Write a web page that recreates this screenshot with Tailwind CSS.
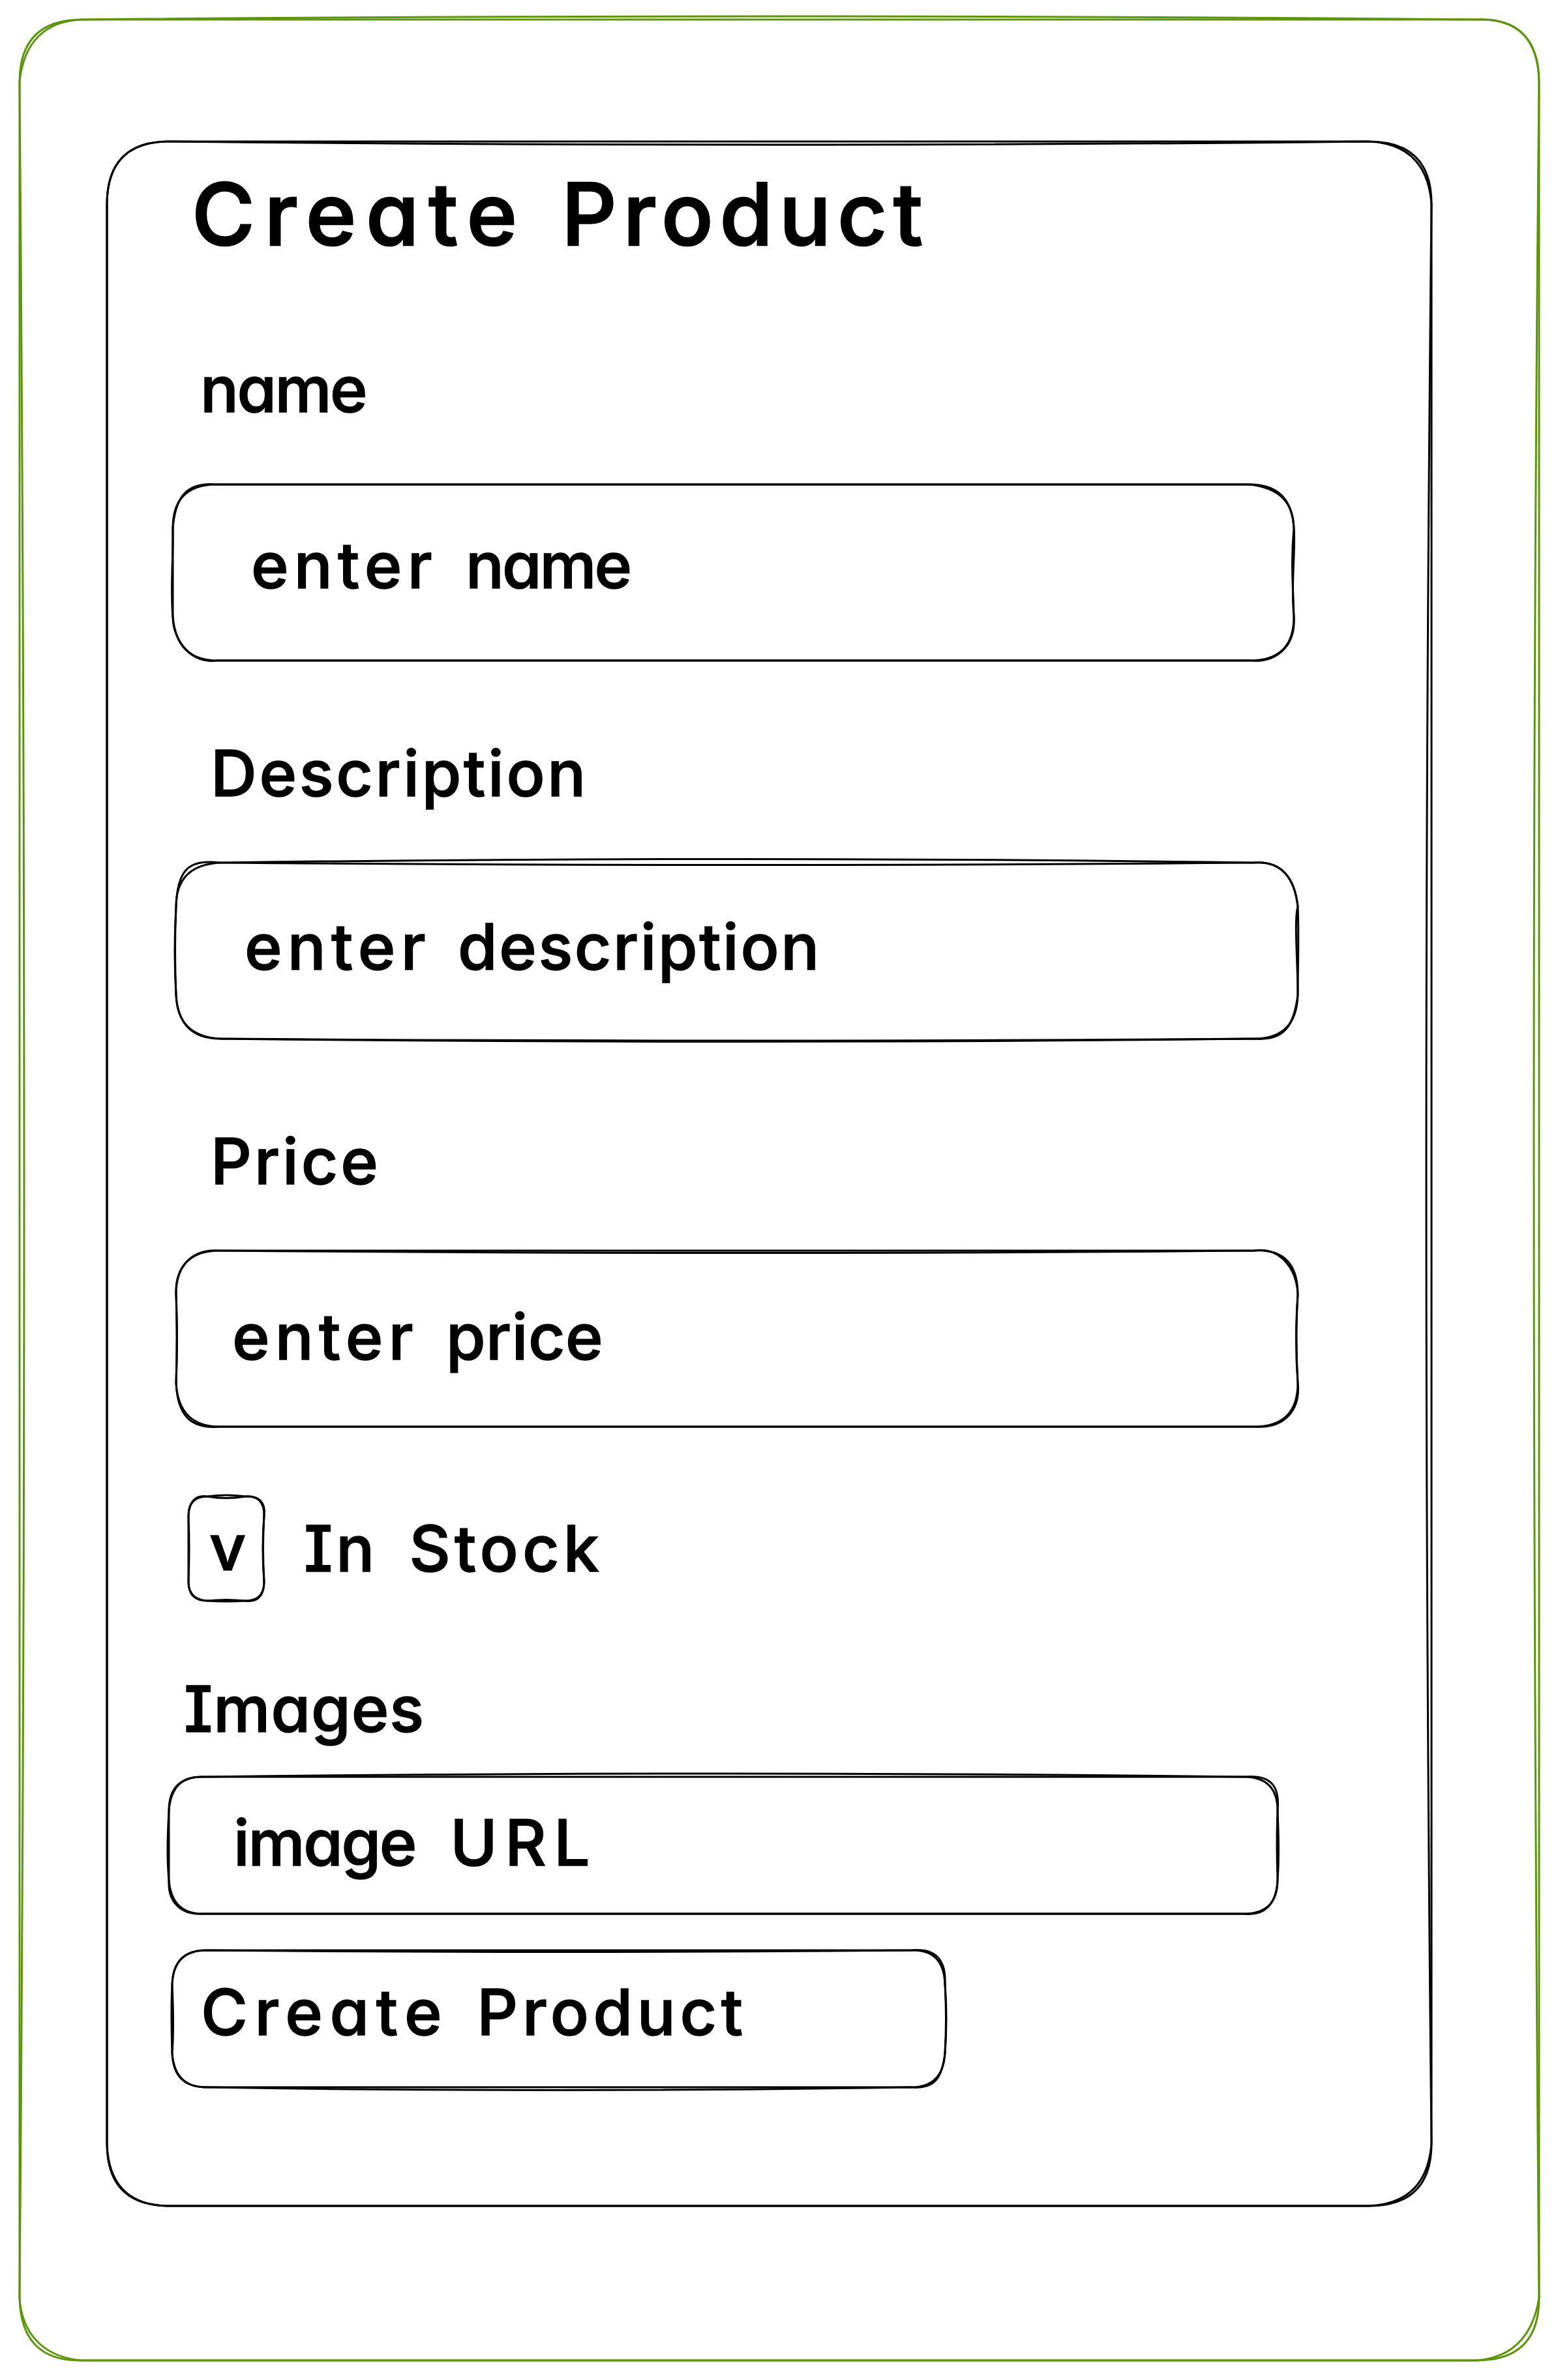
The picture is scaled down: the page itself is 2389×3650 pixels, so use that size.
<!DOCTYPE html>
<html lang="en"><head><meta charset="utf-8"><title>Create Product</title>
<script src="https://cdn.jsdelivr.net/npm/@tailwindcss/browser@4"></script></head>
<body class="bg-white p-[30px] text-black font-['Virgil','Inter',sans-serif] font-medium text-[98px] leading-[100px] whitespace-nowrap [font-feature-settings:'cv11','cv08'] [-webkit-text-stroke:1.5px_black]">
<main class="relative w-[2330px] h-[3590px] pt-[187px] pl-[134px] text-[#5c940d]">
  <svg class="absolute inset-0 w-full h-full overflow-visible" viewBox="0 0 2330 3590" fill="none" stroke="currentColor" stroke-width="3">
    <path d="M96 0H2234Q2330 -3 2330 96V3494Q2330 3590 2234 3590H96Q2 3592 0 3494V96Q0 0 96 0Z"/>
    <path d="M96 0Q1165 -10 2234 0Q2328 -4 2330 96Q2314 1650 2330 3494C2320 3556 2286 3586 2234 3590H96C44 3586 4 3556 0 3494Q14 1795 0 96C6 36 38 2 96 0"/>
  </svg>
  <form class="relative w-[2031px] h-[3166px] flex flex-col items-start text-black">
    <svg class="absolute inset-0 w-full h-full overflow-visible" viewBox="0 0 2031 3166" fill="none" stroke="currentColor" stroke-width="3">
      <path d="M96 0H1935Q2031 0 2031 96V3070Q2031 3166 1935 3166H96Q0 3166 0 3070V96Q0 0 96 0Z"/>
      <path d="M96 0Q1015 10 1935 0Q2024 4 2031 96Q2015 1583 2031 3070Q2024 3162 1935 3166H96Q3 3166 0 3070V96Q1 -1 96 0"/>
    </svg>
    <h1 class="mt-[41px] ml-[130px] text-[132px] leading-[140px] [-webkit-text-stroke:2.5px_black]"><span class="tracking-[14.7px]">Create</span> <span class="tracking-[9.8px] ml-[18px]">Product</span></h1>
    <label class="mt-[149px] ml-[143px]"><span class="tracking-[-2.5px]">name</span></label>
    <div class="relative mt-[96px] ml-[101px] w-[1719px] h-[270px] pt-[74px] pl-[120px]">
      <svg class="absolute inset-0 w-full h-full overflow-visible" viewBox="0 0 1719 270" fill="none" stroke="currentColor" stroke-width="3">
        <path d="M67 0H1652Q1715 0 1719 67C1722 100 1714 150 1719 203Q1719 270 1652 270H67Q6 270 0 203V67Q0 0 67 0Z"/>
        <path d="M67 0H1652C1700 6 1718 30 1719 67C1714 120 1718 160 1719 203C1722 250 1690 274 1652 270H67C30 276 0 240 0 203C-4 160 1 110 0 67C4 20 20 -4 67 0"/>
      </svg>
      <span class="tracking-[8.3px]">enter</span> <span class="tracking-[-3px] ml-[17px]">name</span>
    </div>
    <label class="mt-[123px] ml-[159px]"><span class="tracking-[3.7px]">Description</span></label>
    <div class="relative mt-[87px] ml-[106px] w-[1720px] h-[270px] pt-[79px] pl-[105px]">
      <svg class="absolute inset-0 w-full h-full overflow-visible" viewBox="0 0 1720 270" fill="none" stroke="currentColor" stroke-width="3">
        <path d="M67 0Q860 -11 1653 0Q1712 -4 1720 67C1722 110 1720 160 1720 203Q1718 270 1653 270Q860 279 67 270Q2 266 0 203Q-4 135 0 67Q0 4 67 0Z"/>
        <path d="M67 0Q860 7 1653 0Q1712 -4 1720 67C1714 90 1720 150 1720 203C1714 250 1700 274 1653 270Q860 276 67 270Q4 270 0 203Q-3 135 0 67C2 10 20 -6 67 0"/>
      </svg>
      <span class="tracking-[8.3px]">enter</span> <span class="tracking-[2.6px] ml-[15px]">description</span>
    </div>
    <label class="mt-[138px] ml-[159px]"><span class="tracking-[4px]">Price</span></label>
    <div class="relative mt-[87px] ml-[106px] w-[1720px] h-[270px] pt-[82px] pl-[86px]">
      <svg class="absolute inset-0 w-full h-full overflow-visible" viewBox="0 0 1720 270" fill="none" stroke="currentColor" stroke-width="3">
        <path d="M67 0H1653Q1720 -4 1720 67Q1715 135 1720 203Q1720 270 1653 270H67Q4 270 0 203Q3 135 0 67Q0 0 67 0Z"/>
        <path d="M67 0Q860 7 1653 0C1690 -6 1718 24 1720 67Q1716 135 1720 203C1724 240 1704 274 1653 270H67C20 274 2 250 0 203Q2 135 0 67C-2 30 20 -4 67 0"/>
      </svg>
      <span class="tracking-[8.3px]">enter</span> <span class="tracking-[0.5px] ml-[16px]">price</span>
    </div>
    <div class="mt-[107px] ml-[125px] flex gap-[61px]">
      <div class="relative w-[116px] h-[160px] pt-[28px] pl-[32px]">
        <svg class="absolute inset-0 w-full h-full overflow-visible" viewBox="0 0 116 160" fill="none" stroke="currentColor" stroke-width="3">
          <path d="M29 0Q58 -4 87 0Q116 -2 116 29Q112 80 116 131Q116 160 87 160Q58 162 29 160Q0 158 0 131Q2 80 0 29Q0 0 29 0Z"/>
          <path d="M29 0Q58 5 87 0C106 -2 119 8 116 29Q113 80 116 131C116 154 104 163 87 160Q58 157 29 160Q0 160 0 131Q0 80 0 29Q2 -4 29 0"/>
        </svg>
        <span>v</span>
      </div>
      <label class="pt-[30px]"><span class="tracking-[5px]">In</span> <span class="tracking-[6.2px] ml-[22px]">Stock</span></label>
    </div>
    <label class="mt-[116px] ml-[118px]"><span class="tracking-[1px]">Images</span></label>
    <div class="relative mt-[54px] ml-[95px] w-[1700px] h-[210px] pt-[51px] pl-[99px]">
      <svg class="absolute inset-0 w-full h-full overflow-visible" viewBox="0 0 1700 210" fill="none" stroke="currentColor" stroke-width="3">
        <path d="M52 0H1648Q1700 0 1700 52Q1698 105 1700 158Q1700 210 1648 210H52Q4 210 0 158Q-4 120 0 52Q0 0 52 0Z"/>
        <path d="M52 0Q850 -10 1648 0C1688 -4 1704 12 1700 52Q1703 120 1700 158C1698 196 1680 214 1648 210H52C16 212 -2 190 0 158Q0 105 0 52Q4 -2 52 0"/>
      </svg>
      <span class="tracking-[-2.3px]">image</span> <span class="tracking-[11.5px] ml-[27px]">URL</span>
    </div>
    <button type="button" class="relative mt-[56px] ml-[100px] w-[1185px] h-[210px] pt-[45px] pl-[44px] flex items-start text-left">
      <svg class="absolute inset-0 w-full h-full overflow-visible" viewBox="0 0 1185 210" fill="none" stroke="currentColor" stroke-width="3">
        <path d="M52 0H1133Q1183 -2 1185 52Q1188 105 1185 158Q1182 210 1133 210H52Q4 210 0 158Q3 120 0 52Q2 0 52 0Z"/>
        <path d="M52 0Q592 5 1133 0C1170 -4 1187 14 1185 52Q1189 105 1185 158C1180 200 1166 213 1133 210Q592 219 52 210Q2 210 0 158Q-2 90 0 52Q2 0 52 0"/>
      </svg>
      <span><span class="tracking-[10.7px]">Create</span> <span class="tracking-[6.7px] ml-[17px]">Product</span></span>
    </button>
  </form>
</main>
</body></html>
